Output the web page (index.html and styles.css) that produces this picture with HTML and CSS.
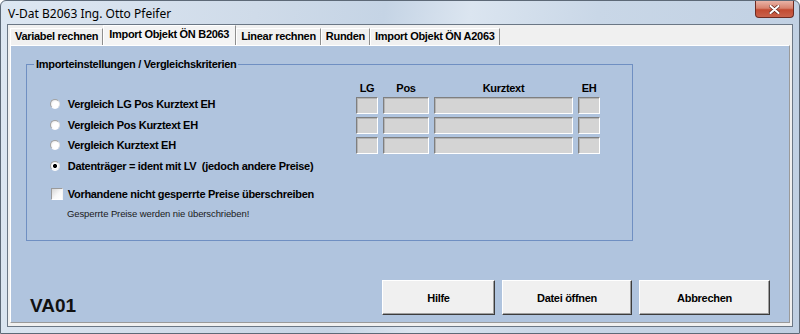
FILE: index.html
```html
<!DOCTYPE html>
<html lang="de">
<head>
  <meta charset="UTF-8" />
  <title>V-Dat B2063 Ing. Otto Pfeifer</title>
  <link rel="stylesheet" href="styles.css">
</head>
<body>

  <div class="window">
    <div class="titlebar">
      <span class="title">V-Dat B2063 Ing. Otto Pfeifer</span>
      <span class="close">
        <svg width="11" height="9" viewBox="0 0 11 9"><path d="M1.5 1 L9.5 8 M9.5 1 L1.5 8" stroke="#5a1e14" stroke-width="3.4" stroke-linecap="round"/><path d="M1.5 1 L9.5 8 M9.5 1 L1.5 8" stroke="#fff" stroke-width="2.2" stroke-linecap="round"/></svg>
      </span>
    </div>

    <div class="client">
      <div class="tabs">
        <div class="tab">Variabel rechnen</div>
        <div class="tab active">Import Objekt ÖN B2063</div>
        <div class="tab">Linear rechnen</div>
        <div class="tab">Runden</div>
        <div class="tab">Import Objekt ÖN A2063</div>
      </div>

      <div class="panel">
        <fieldset class="group">
          <legend>Importeinstellungen / Vergleichskriterien</legend>
          <div class="group-body">
            <div class="options">
              <label class="option"><input type="radio" name="cmp"> Vergleich LG Pos Kurztext EH</label>
              <label class="option"><input type="radio" name="cmp"> Vergleich Pos Kurztext EH</label>
              <label class="option"><input type="radio" name="cmp"> Vergleich Kurztext EH</label>
              <label class="option"><input type="radio" name="cmp" checked> Datenträger = ident mit LV  (jedoch andere Preise)</label>
            </div>
            <div class="fields">
              <span class="head">LG</span>
              <span class="head">Pos</span>
              <span class="head">Kurztext</span>
              <span class="head">EH</span>
              <span class="field"></span><span class="field"></span><span class="field"></span><span class="field"></span>
              <span class="field"></span><span class="field"></span><span class="field"></span><span class="field"></span>
              <span class="field"></span><span class="field"></span><span class="field"></span><span class="field"></span>
            </div>
          </div>
          <label class="check"><input type="checkbox"> Vorhandene nicht gesperrte Preise überschreiben</label>
          <p class="note">Gesperrte Preise werden nie überschrieben!</p>
        </fieldset>

        <div class="footer">
          <span class="code">VA01</span>
          <div class="buttons">
            <button class="btn help">Hilfe</button>
            <button class="btn open">Datei öffnen</button>
            <button class="btn cancel">Abbrechen</button>
          </div>
        </div>
      </div>
    </div>
  </div>

</body>
</html>
```

FILE: styles.css
```css
body { margin: 0; background: #fff; font-family: "Liberation Sans", Arial, sans-serif; color: #000; }

.window {
  width: 800px;
  height: 334px;
  box-sizing: border-box;
  border: 1px solid #5d6977;
  border-radius: 6px 6px 0 0;
  background: linear-gradient(100deg, #dde7f2 0%, #cfdbe9 30%, #c5d4e5 45%, #dbe5f0 55%, #c9d7e7 70%, #bfcfe2 100%);
  display: flex;
  flex-direction: column;
}

.titlebar { height: 23px; display: flex; align-items: flex-start; padding-left: 7px; }
.title { font: 12px/23px "Noto Sans", sans-serif; padding-top: 1px; color: #000; }
.close {
  margin-left: auto;
  margin-right: 5px;
  width: 39px;
  height: 17px;
  box-sizing: border-box;
  border: 1px solid #6d2b22;
  border-top: none;
  border-radius: 0 0 4px 4px;
  background: linear-gradient(#e9b3a6, #d7826e 45%, #c24a31 55%, #c9624b);
  display: flex;
  align-items: center;
  justify-content: center;
}

.client {
  flex: 1;
  margin: 0 6px 6px;
  border: 1px solid #6b7785;
  background: #f0f0f0;
  padding: 0 2px 3px;
  display: flex;
  flex-direction: column;
}

.tabs { display: flex; height: 20px; align-items: flex-end; }
.tab {
  height: 17px;
  box-sizing: border-box;
  padding: 0 4px;
  font: bold 11px/15px "Liberation Sans", Arial, sans-serif;
  letter-spacing: -0.3px;
  border-top: 1px solid #fff;
  border-left: 1px solid #fff;
  border-right: 1px solid #8e8e8e;
  white-space: nowrap;
}
.tab.active { height: 20px; line-height: 16px; padding: 0 6px 0 5px; background: #f4f4f4; }

.panel {
  flex: 1;
  background: #b0c4de;
  border: 1px solid;
  border-color: #fff #9a9a9a #9a9a9a #fff;
  display: flex;
  flex-direction: column;
}

.group {
  margin: 12px 0 0 15px;
  width: 607px;
  box-sizing: border-box;
  border: 1px solid #6f8fc2;
  padding: 11px 7px 20px;
}
.group legend {
  padding: 0 2px;
  font: bold 11px/13px "Liberation Sans", Arial, sans-serif;
  letter-spacing: -0.3px;
}

.group-body { display: flex; justify-content: space-between; }

.options { margin-top: 12px; }
.option, .check {
  display: flex;
  align-items: center;
  font: bold 11px "Liberation Sans", Arial, sans-serif;
  letter-spacing: -0.3px;
  white-space: pre;
}
.option { height: 20.5px; }

.option input {
  appearance: none;
  width: 10px;
  height: 10px;
  margin: 0 5px 0 16px;
  border-radius: 50%;
  border: 1px solid;
  border-color: #a3a3a3 #e6e6e6 #fdfdfd #a3a3a3;
  background: radial-gradient(circle at 62% 62%, #fff 45%, #dcdcdc);
}
.option input:checked {
  background: radial-gradient(circle, #000 0 1.6px, #fff 2.4px 45%, #dcdcdc);
}

.fields {
  display: grid;
  grid-template-columns: 22px 46px 139px 22px;
  grid-template-rows: 12px 17px 17px 17px;
  column-gap: 5px;
  row-gap: 3px;
  margin-right: 25px;
}
.head {
  text-align: center;
  font: bold 11px/12px "Liberation Sans", Arial, sans-serif;
  letter-spacing: -0.3px;
}
.field {
  background: #d4d4d4;
  border: 1px solid;
  border-color: #7f7f7f #fff #fff #7f7f7f;
  box-shadow: inset 1px 1px 0 #b4b4b4;
}

.check { height: 20px; margin-top: 8px; }
.check input {
  appearance: none;
  width: 12px;
  height: 12px;
  margin: 0 2px 0 17px;
  border: 1px solid;
  border-color: #9a9a9a #f4f4f4 #fff #9a9a9a;
  background: linear-gradient(135deg, #d6d6d6, #f8f8f8 55%, #fff);
}

.note {
  margin: 3px 0 0 33px;
  font: 9.5px/13px "Liberation Sans", Arial, sans-serif;
  letter-spacing: -0.1px;
  color: #1a1a1a;
}

.footer {
  margin-top: auto;
  display: flex;
  align-items: flex-end;
  padding: 0 19px 7px;
}
.code { font: bold 19px/19px "Liberation Sans", Arial, sans-serif; color: #111; }
.buttons { margin-left: auto; display: flex; gap: 7px; }
.btn {
  height: 35px;
  padding: 0;
  background: #f0f0f0;
  border: 1px solid;
  border-color: #fff #3c3c3c #3c3c3c #fff;
  box-shadow: inset -1px -1px 0 #a0a0a0;
  font: bold 11px "Liberation Sans", Arial, sans-serif;
  letter-spacing: -0.3px;
  color: #000;
}
.help { width: 113px; }
.open { width: 130px; }
.cancel { width: 131px; }
```
